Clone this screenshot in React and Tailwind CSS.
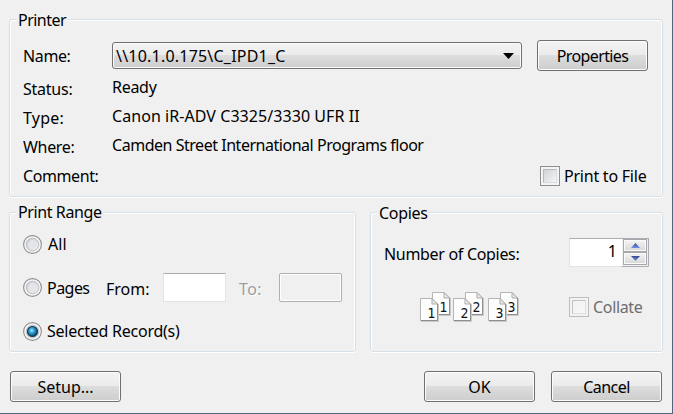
const BUTTON_FACE =
  "bg-[linear-gradient(to_bottom,#f3f3f3_0%,#ebebeb_48%,#dddddd_50%,#cdcdcd_100%)]";

function Text({ className = "", children }) {
  return (
    <span className={`block h-5 shrink-0 whitespace-nowrap text-[16px] leading-5 ${className}`}>
      {children}
    </span>
  );
}

function GroupBox({ className = "", title, children }) {
  return (
    <section
      className={`rounded-[3px] border border-[#d5dfe5] shadow-[inset_1px_1px_0_#fff,inset_-1px_0_0_#fff,0_1px_0_#fff] ${className}`}
    >
      {title}
      {children}
    </section>
  );
}

function Button({ className = "", children }) {
  return (
    <button
      className={`flex h-[31px] w-[111px] items-center justify-center rounded-[3px] border border-[#707070] shadow-[inset_0_0_0_1px_#fbfbfb] ${BUTTON_FACE} ${className}`}
    >
      {children}
    </button>
  );
}

function Radio({ className = "", checked = false }) {
  return (
    <svg className={`h-[19px] w-[19px] shrink-0 ${className}`} viewBox="0 0 19 19">
      <defs>
        <linearGradient id="well" x1="0" y1="0" x2="1" y2="1">
          <stop offset="0" stopColor="#c4c8cd" />
          <stop offset="1" stopColor="#f5f5f5" />
        </linearGradient>
        <radialGradient id="dot" cx="0.42" cy="0.4" r="0.6">
          <stop offset="0" stopColor="#b8f0fc" />
          <stop offset="0.3" stopColor="#45b4e0" />
          <stop offset="0.7" stopColor="#1478ac" />
          <stop offset="1" stopColor="#0b3552" />
        </radialGradient>
      </defs>
      <circle cx="9.5" cy="9.5" r="8.9" fill="#f6f6f6" stroke="#8e8f8f" strokeWidth="1.1" />
      <circle cx="9.5" cy="9.5" r="6.3" fill="url(#well)" stroke="#b4b8bd" strokeWidth="0.9" />
      <circle cx="9.5" cy="9.5" r="4.4" fill="#e3e5e8" />
      {checked && (
        <circle cx="9.5" cy="9.5" r="5" fill="url(#dot)" stroke="#163a56" strokeWidth="1.1" />
      )}
    </svg>
  );
}

function Checkbox({ className = "" }) {
  return (
    <span className={`block h-5 w-5 shrink-0 border bg-[#f4f4f4] p-[2px] ${className}`}>
      <span className="block h-full w-full border border-[#b4b9be] border-r-[#d9dbde] border-b-[#d9dbde] bg-linear-to-br from-[#cfd2d7] to-[#f6f6f6]" />
    </span>
  );
}

function Sheets({ digit }) {
  return (
    <svg className="h-[31px] w-[31px] shrink-0" viewBox="0 0 31 31">
      {[
        [12, 0],
        [0, 6],
      ].map(([x, y]) => (
        <g key={x} transform={`translate(${x} ${y})`}>
          <path d="M1 23.5H18.5V6" fill="none" stroke="#c9c9c9" />
          <path d="M0.5 0.5H12L17.5 6V22.5H0.5Z" fill="#fdfdfd" stroke="#b5b5b5" />
          <path d="M17.5 6V22.5H1" fill="none" stroke="#8f8f8f" />
          <path d="M12 0.5V6H17.5Z" fill="#e9e9e9" stroke="#ababab" />
          <text x="11.6" y="20" textAnchor="middle" fontSize="14" fill="#111" fontFamily="DejaVu Sans Condensed, Noto Sans, sans-serif">
            {digit}
          </text>
        </g>
      ))}
    </svg>
  );
}

function SpinButton({ up = false }) {
  return (
    <span className="flex h-[13px] w-6 items-center justify-center border border-[#a8a8ac] bg-linear-to-b from-[#f4f4f4] to-[#d8d8d8] shadow-[inset_0_0_0_1px_#fafafa]">
      <svg className="h-[5px] w-[9px]" viewBox="0 0 9 5">
        <defs>
          <linearGradient id="spin" x1="0" y1="0" x2="0" y2="1">
            <stop offset="0" stopColor="#35498a" />
            <stop offset="1" stopColor="#7390ec" />
          </linearGradient>
        </defs>
        <path d={up ? "M0 5L4.5 0L9 5Z" : "M0 0H9L4.5 5Z"} fill="url(#spin)" />
      </svg>
    </span>
  );
}

export default function App() {
  return (
    <main className="flex h-[414px] w-[673px] flex-col overflow-hidden border-r border-b border-[#53647c] bg-[#f0f0f0] pt-[19px] pl-[9px] font-['Noto_Sans','Liberation_Sans',sans-serif] text-black">
      <GroupBox
        className="h-[178px] w-[654px] shrink-0"
        title={
          <Text className="-mt-[10px] ml-[6px] w-[52px] bg-[#f0f0f0] pl-[2px] tracking-[-0.53px]">
            Printer
          </Text>
        }
      >
        <div className="flex pl-[13px]">
          <div className="flex w-[89px] flex-col pt-4">
            <Text className="tracking-[-0.38px]">Name:</Text>
            <Text className="mt-[13px] tracking-[-0.24px]">Status:</Text>
            <Text className="mt-[9px] tracking-[0.2px]">Type:</Text>
            <Text className="mt-[9px] tracking-[-0.32px]">Where:</Text>
            <Text className="mt-[9px] tracking-[-0.4px]">Comment:</Text>
          </div>
          <div className="flex w-[425px] flex-col pt-3">
            <div
              className={`flex h-[27px] w-[410px] items-center justify-between rounded-[3px] border border-[#707070] pr-[7px] pl-[3px] shadow-[inset_0_0_0_1px_#fbfbfb] ${BUTTON_FACE}`}
            >
              <Text className="tracking-[0.21px]">{"\\\\10.1.0.175\\C_IPD1_C"}</Text>
              <svg className="h-[6px] w-[11px]" viewBox="0 0 11 6">
                <path d="M0 0H11L5.5 6Z" fill="#000" />
              </svg>
            </div>
            <Text className="mt-2 tracking-[-0.29px]">Ready</Text>
            <Text className="mt-[9px] tracking-[0.06px]">Canon iR-ADV C3325/3330 UFR II</Text>
            <Text className="mt-[9px] tracking-[-0.47px]">
              Camden Street International Programs floor
            </Text>
          </div>
          <div className="flex flex-col pt-[10px]">
            <Button>
              <Text className="tracking-[-0.62px]">Properties</Text>
            </Button>
            <label className="mt-[95px] ml-[3px] flex gap-1">
              <Checkbox className="border-[#8e8f8f]" />
              <Text className="tracking-[-0.23px]">Print to File</Text>
            </label>
          </div>
        </div>
      </GroupBox>

      <div className="mt-[15px] flex gap-[14px]">
        <GroupBox
          className="h-[140px] w-[347px] shrink-0"
          title={
            <Text className="-mt-[11px] ml-[6px] w-[87px] bg-[#f0f0f0] pl-[2px] tracking-[-0.4px]">
              Print Range
            </Text>
          }
        >
          <div className="pl-[13px]">
            <label className="mt-3 flex h-5 gap-[6px]">
              <Radio className="mt-px" />
              <Text className="tracking-[0.1px]">All</Text>
            </label>
            <div className="mt-[19px] flex h-[29px] items-center">
              <Radio />
              <Text className="ml-[5px] w-[59px] tracking-[-0.54px]">Pages</Text>
              <Text className="w-[57px] pt-px">From:</Text>
              <span className="h-[29px] w-[63px] border border-[#e2e3ea] border-t-[#abadb3] bg-white" />
              <Text className="ml-[13px] w-10 pt-px tracking-[0.4px] text-[#9d9d9d] [text-shadow:1px_1px_0_#fff]">
                To:
              </Text>
              <span className="h-[29px] w-[63px] rounded-[2px] border border-[#afafaf] shadow-[inset_0_0_0_1px_#fff]" />
            </div>
            <label className="mt-[19px] flex h-5 gap-[5px]">
              <Radio className="mt-px" checked />
              <Text className="tracking-[-0.26px]">Selected Record(s)</Text>
            </label>
          </div>
        </GroupBox>

        <GroupBox
          className="h-[140px] w-[293px] shrink-0"
          title={
            <Text className="-mt-[10px] ml-[6px] w-[51px] bg-[#f0f0f0] pl-[2px] tracking-[-0.33px]">
              Copies
            </Text>
          }
        >
          <div className="pl-[13px]">
            <div className="mt-[15px] flex h-[29px] items-center">
              <Text className="w-[185px] pt-px tracking-[-0.31px]">Number of Copies:</Text>
              <div className="flex h-[29px] w-[80px] items-start justify-end border border-[#e2e3ea] border-t-[#abadb3] border-r-[#abadb3] bg-white">
                <Text className="mt-[2px] pr-[5px]">1</Text>
                <div className="flex h-[27px] flex-col bg-[#f0f0f0] p-px pt-0 shadow-[0_1px_0_#abadb3]">
                  <SpinButton up />
                  <SpinButton />
                </div>
              </div>
            </div>
            <div className="mt-[25px] flex pl-9">
              <div className="flex w-[149px] gap-[2px]">
                <Sheets digit="1" />
                <Sheets digit="2" />
                <span className="block w-0" />
                <Sheets digit="3" />
              </div>
              <label className="mt-[5px] flex gap-1">
                <Checkbox className="border-[#b1b1b1] opacity-80 [&>span]:from-[#f0f1f3] [&>span]:to-[#fbfbfb]" />
                <Text className="tracking-[-0.33px] text-[#6d6d6d]">Collate</Text>
              </label>
            </div>
          </div>
        </GroupBox>
      </div>

      <footer className="mt-[19px] flex pl-px">
        <Button>
          <Text>Setup...</Text>
        </Button>
        <Button className="ml-[303px] border-[#3c7fb1] shadow-[inset_0_0_0_1px_#46d0f5]">
          <Text>OK</Text>
        </Button>
        <Button className="ml-4">
          <Text className="tracking-[-0.55px]">Cancel</Text>
        </Button>
      </footer>
    </main>
  );
}
